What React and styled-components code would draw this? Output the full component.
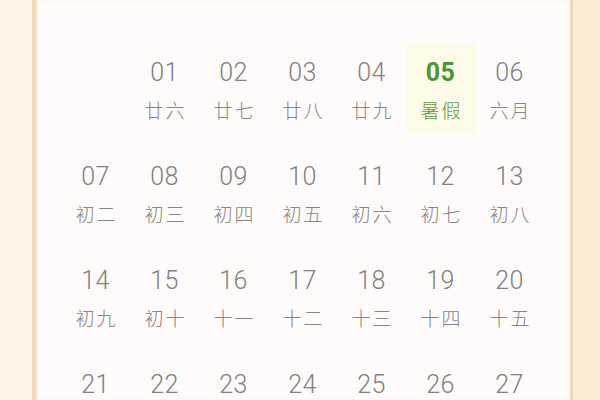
import styled, { createGlobalStyle } from 'styled-components'

const GlobalStyle = createGlobalStyle`
    html, body {
        margin: 0;
        padding: 0;
        background: #fbf2e0;
    }
    #root {
        height: 400px;
        overflow: hidden;
    }
`;

const Page = styled.div`
    display: flex;
    height: 400px;
    padding: 0 27px 0 32px;
    background: linear-gradient(90deg, #fcf6e8 0%, #f9ecd3 100%);
`;

const Card = styled.section`
    flex: 1;
    display: flex;
    flex-direction: column;
    background: #fffbfa;
    border-left: 4px solid #efd8b3;
    border-right: 3px solid #efd8b3;
    box-shadow: inset 2px 0 2px rgba(230, 200, 150, 0.25);
`;

const TopBand = styled.div`
    height: 8px;
    margin: 0 30px 0 29px;
    background: #fdf8de;
    border-radius: 0 0 4px 4px;
`;

const Grid = styled.div`
    display: grid;
    grid-template-columns: repeat(7, 69px);
    grid-auto-rows: 90px;
    row-gap: 14px;
    padding: 35px 0 0 25px;
    padding-top: 35px;
    margin-top: 0;
`;

const Cell = styled.div`
    display: flex;
    flex-direction: column;
    align-items: center;
    padding-top: 15px;
    background: ${p => (p.$active ? '#fdfae8' : 'transparent')};
    font-family: Roboto, "Noto Sans CJK SC", sans-serif;
`;

const Day = styled.div`
    font-size: 25px;
    line-height: 30px;
    font-weight: ${p => (p.$active ? 700 : 300)};
    color: ${p => (p.$active ? '#4a9636' : '#808080')};
    letter-spacing: 0.5px;
`;

const Lunar = styled.div`
    margin-top: 10px;
    font-size: 19px;
    line-height: 24px;
    font-family: "Noto Sans CJK SC", sans-serif;
    font-weight: 300;
    color: ${p => (p.$active ? '#5a9c45' : '#858585')};
    letter-spacing: 2px;
    padding-left: 2px;
`;

const Body = styled.div`
    padding-top: 8px;
`;

const days = [
    null,
    ['01', '廿六'], ['02', '廿七'], ['03', '廿八'], ['04', '廿九'], ['05', '暑假', true], ['06', '六月'],
    ['07', '初二'], ['08', '初三'], ['09', '初四'], ['10', '初五'], ['11', '初六'], ['12', '初七'], ['13', '初八'],
    ['14', '初九'], ['15', '初十'], ['16', '十一'], ['17', '十二'], ['18', '十三'], ['19', '十四'], ['20', '十五'],
    ['21', '十六'], ['22', '十七'], ['23', '十八'], ['24', '十九'], ['25', '二十'], ['26', '廿一'], ['27', '廿二'],
];

const App = () => {
    return (
        <>
            <GlobalStyle />
            <Page>
                <Card>
                    <TopBand />
                    <Body>
                        <Grid>
                            {days.map((d, i) =>
                                d ? (
                                    <Cell key={i} $active={d[2]}>
                                        <Day $active={d[2]}>{d[0]}</Day>
                                        <Lunar $active={d[2]}>{d[1]}</Lunar>
                                    </Cell>
                                ) : (
                                    <Cell key={i} />
                                )
                            )}
                        </Grid>
                    </Body>
                </Card>
            </Page>
        </>
    )
}

export default App;
